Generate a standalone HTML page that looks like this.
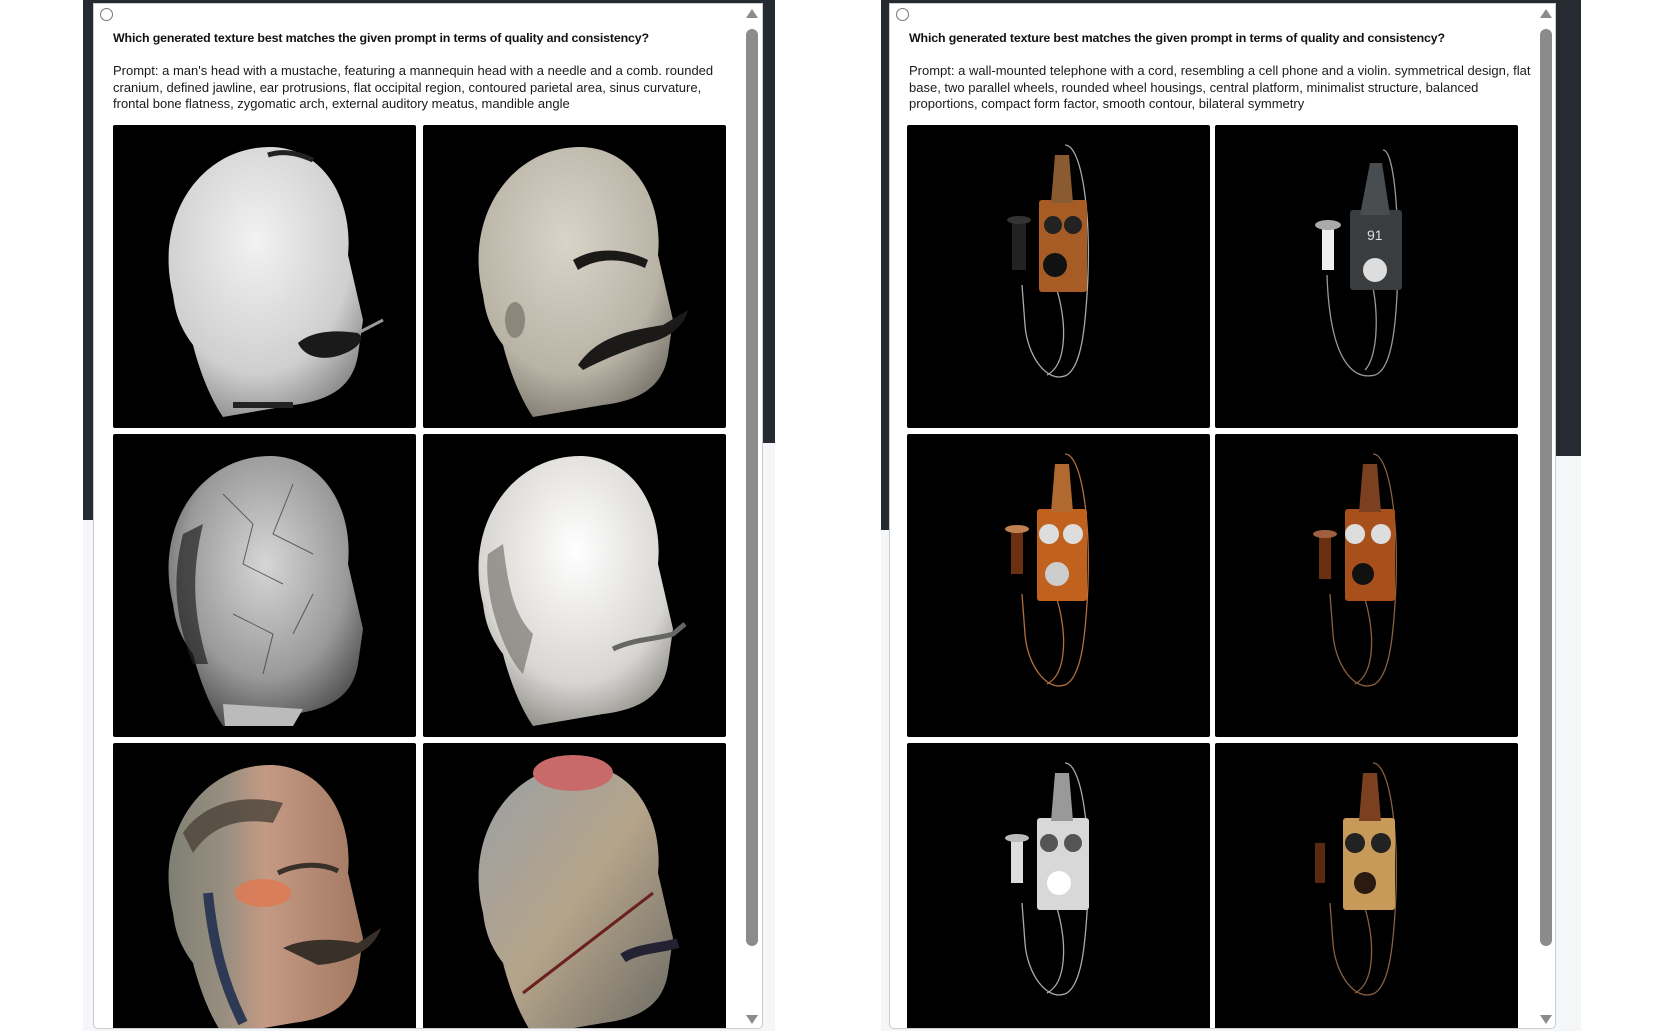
<!DOCTYPE html>
<html><head><meta charset="utf-8"><style>
html,body{margin:0;padding:0;width:1655px;height:1031px;overflow:hidden;background:#fff;font-family:"Liberation Sans",Arial,sans-serif}
.bgL{position:absolute;background:#f5f6f8}
.dk{position:absolute;background:#252b31}
.card{position:absolute;top:3px;height:1024px;background:#fff;border:1px solid #c9ccd0;border-radius:0 0 5px 5px;overflow:hidden}
.q{position:absolute;left:19px;top:27px;font-size:12.4px;font-weight:bold;color:#111;white-space:nowrap;letter-spacing:-0.15px}
.p{position:absolute;left:19px;top:59px;width:622px;font-size:13px;line-height:16.5px;color:#1a1a1a;letter-spacing:0}
.circ{position:absolute;left:6px;top:4px;width:11px;height:11px;border:1px solid #777;border-radius:50%}
.tile{position:absolute;width:303px;height:303px;background:#000;border-radius:2px}
.tile svg{display:block}
.sb{position:absolute;width:12px;top:25px;height:917px;background:#8b8b8b;border-radius:6px}
.ua,.da{position:absolute;width:0;height:0;border-left:6px solid transparent;border-right:6px solid transparent}
.ua{top:5px;border-bottom:9px solid #8b8b8b}
.da{top:1011px;border-top:9px solid #8b8b8b}
</style></head><body>
<div class="bgL" style="left:83px;top:0;width:692px;height:1031px"></div>
<div class="bgL" style="left:881px;top:0;width:700px;height:1031px"></div>
<div class="dk" style="left:83px;top:0;width:692px;height:443px"></div>
<div class="dk" style="left:83px;top:443px;width:10px;height:77px"></div>
<div class="dk" style="left:881px;top:0;width:700px;height:456px"></div>
<div class="dk" style="left:881px;top:456px;width:8px;height:74px"></div>

<svg width="0" height="0" style="position:absolute"><defs>
<radialGradient id="gW" cx="0.45" cy="0.35" r="0.7"><stop offset="0" stop-color="#f2f2f2"/><stop offset="0.7" stop-color="#cfcfcf"/><stop offset="1" stop-color="#8a8a8a"/></radialGradient>
<radialGradient id="gB" cx="0.45" cy="0.35" r="0.7"><stop offset="0" stop-color="#d9d4c8"/><stop offset="0.7" stop-color="#b9b3a6"/><stop offset="1" stop-color="#7d786e"/></radialGradient>
<radialGradient id="gS" cx="0.5" cy="0.4" r="0.7"><stop offset="0" stop-color="#d6d6d6"/><stop offset="0.6" stop-color="#9a9a9a"/><stop offset="1" stop-color="#3a3a3a"/></radialGradient>
<radialGradient id="gC" cx="0.5" cy="0.35" r="0.7"><stop offset="0" stop-color="#ffffff"/><stop offset="0.7" stop-color="#d8d6d2"/><stop offset="1" stop-color="#8d8b86"/></radialGradient>
<linearGradient id="gP" x1="0" y1="0" x2="1" y2="0"><stop offset="0" stop-color="#7e8074"/><stop offset="0.3" stop-color="#9a8f80"/><stop offset="0.5" stop-color="#c49a84"/><stop offset="1" stop-color="#a27861"/></linearGradient>
<linearGradient id="gM" x1="0" y1="0" x2="1" y2="1"><stop offset="0" stop-color="#9aa0a6"/><stop offset="0.5" stop-color="#b5a48a"/><stop offset="1" stop-color="#6b6a64"/></linearGradient>
</defs></svg>

<!-- LEFT CARD -->
<div class="card" style="left:93px;width:668px">
<div class="circ"></div>
<div class="q">Which generated texture best matches the given prompt in terms of quality and consistency?</div>
<div class="p">Prompt: a man's head with a mustache, featuring a mannequin head with a needle and a comb. rounded cranium, defined jawline, ear protrusions, flat occipital region, contoured parietal area, sinus curvature, frontal bone flatness, zygomatic arch, external auditory meatus, mandible angle</div>

<div class="tile" style="left:19px;top:121px"><svg width="303" height="303"><path d="M60,170 C40,90 90,20 160,22 C215,25 240,80 235,130 L250,195 L245,230 C240,260 220,275 180,280 L110,292 C95,270 85,240 80,220 C65,200 62,185 60,170 Z" fill="url(#gW)"/><path d="M185,218 C200,205 225,205 245,208 C255,215 240,228 220,232 C205,235 190,230 185,218Z" fill="#1a1a1a"/><path d="M155,30 C170,25 185,28 200,35" stroke="#222" stroke-width="5" fill="none"/><path d="M120,280 L180,280" stroke="#222" stroke-width="6"/><path d="M245,208 L270,195" stroke="#999" stroke-width="3"/></svg></div>
<div class="tile" style="left:329px;top:121px"><svg width="303" height="303"><path d="M60,170 C40,90 90,20 160,22 C215,25 240,80 235,130 L250,195 L245,230 C240,260 220,275 180,280 L110,292 C95,270 85,240 80,220 C65,200 62,185 60,170 Z" fill="url(#gB)"/><path d="M150,135 C175,120 205,125 225,135 L222,143 C200,133 175,132 155,145Z" fill="#1c1a18"/><path d="M155,240 C175,210 210,205 240,200 L265,185 C260,205 240,215 225,218 C205,225 185,232 160,245Z" fill="#1c1a18"/><ellipse cx="92" cy="195" rx="10" ry="18" fill="#8d877b"/></svg></div>

<div class="tile" style="left:19px;top:430px"><svg width="303" height="303"><path d="M60,170 C40,90 90,20 160,22 C215,25 240,80 235,130 L250,195 L245,230 C240,260 220,275 180,280 L110,292 C95,270 85,240 80,220 C65,200 62,185 60,170 Z" fill="url(#gS)"/><path d="M70,100 C60,140 60,180 80,230 L95,230 C80,180 78,140 90,90Z" fill="#222" opacity=".7"/><g stroke="#333" stroke-width="1" fill="none" opacity=".7"><path d="M110,60 L140,90 L130,130 L170,150"/><path d="M180,50 L160,100 L200,120"/><path d="M120,180 L160,200 L150,240"/><path d="M200,160 L180,200"/></g><path d="M110,270 L190,275 L180,292 L112,292Z" fill="#bbb"/></svg></div>
<div class="tile" style="left:329px;top:430px"><svg width="303" height="303"><path d="M60,170 C40,90 90,20 160,22 C215,25 240,80 235,130 L250,195 L245,230 C240,260 220,275 180,280 L110,292 C95,270 85,240 80,220 C65,200 62,185 60,170 Z" fill="url(#gC)"/><path d="M65,120 C60,160 80,220 100,240 L110,200 C90,180 85,150 80,110Z" fill="#7a7670" opacity=".7"/><path d="M190,215 C210,205 235,205 250,200 L262,190" stroke="#666" stroke-width="5" fill="none"/></svg></div>

<div class="tile" style="left:19px;top:739px"><svg width="303" height="303"><path d="M60,170 C40,90 90,20 160,22 C215,25 240,80 235,130 L250,195 L245,230 C240,260 220,275 180,280 L110,292 C95,270 85,240 80,220 C65,200 62,185 60,170 Z" fill="url(#gP)"/><path d="M70,90 C90,60 130,50 170,60 L160,80 C130,75 100,80 80,110Z" fill="#4a4238" opacity=".8"/><path d="M95,150 C100,200 110,240 130,280" stroke="#2e3a55" stroke-width="10" fill="none"/><ellipse cx="150" cy="150" rx="28" ry="14" fill="#e07850" opacity=".8"/><path d="M170,205 C190,195 220,195 245,200 L268,185 C260,210 230,220 205,222Z" fill="#3a302a"/><path d="M165,130 C185,120 210,120 225,128" stroke="#3a302a" stroke-width="5" fill="none"/></svg></div>
<div class="tile" style="left:329px;top:739px"><svg width="303" height="303"><path d="M60,170 C40,90 90,20 160,22 C215,25 240,80 235,130 L250,195 L245,230 C240,260 220,275 180,280 L110,292 C95,270 85,240 80,220 C65,200 62,185 60,170 Z" fill="url(#gM)"/><ellipse cx="150" cy="30" rx="40" ry="18" fill="#c86a6a"/><path d="M100,250 L230,150" stroke="#6b2020" stroke-width="3"/><path d="M200,215 C215,205 240,205 255,200" stroke="#223" stroke-width="10" fill="none"/></svg></div>

<div class="sb" style="left:652px"></div>
<div class="ua" style="left:652px"></div>
<div class="da" style="left:652px"></div>
</div>

<!-- RIGHT CARD -->
<div class="card" style="left:889px;width:665px">
<div class="circ"></div>
<div class="q">Which generated texture best matches the given prompt in terms of quality and consistency?</div>
<div class="p">Prompt: a wall-mounted telephone with a cord, resembling a cell phone and a violin. symmetrical design, flat base, two parallel wheels, rounded wheel housings, central platform, minimalist structure, balanced proportions, compact form factor, smooth contour, bilateral symmetry</div>

<div class="tile" style="left:17px;top:121px"><svg width="303" height="303"><path d="M158,20 C175,20 185,90 180,170 C178,200 175,240 160,250 C140,260 120,230 118,200 L115,160 M150,165 C160,200 160,240 140,250" stroke="#aaa" stroke-width="1.3" fill="none"/><rect x="132" y="75" width="48" height="92" rx="3" fill="#a65c24"/><path d="M148,30 L162,30 L166,78 L144,78Z" fill="#8a5a30"/><circle cx="146" cy="100" r="9" fill="#222"/><circle cx="166" cy="100" r="9" fill="#222"/><circle cx="148" cy="140" r="12" fill="#111"/><rect x="105" y="95" width="14" height="50" fill="#222"/><ellipse cx="112" cy="95" rx="12" ry="4" fill="#333"/></svg></div>
<div class="tile" style="left:325px;top:121px"><svg width="303" height="303"><path d="M168,25 C180,25 185,100 182,170 C180,210 175,245 160,250 C140,255 115,240 112,150 M150,135 C165,170 165,230 150,245" stroke="#999" stroke-width="1.3" fill="none"/><rect x="135" y="85" width="52" height="80" rx="3" fill="#3a3d40"/><path d="M155,38 L167,38 L175,90 L145,90Z" fill="#4a4d50"/><circle cx="160" cy="145" r="12" fill="#ddd"/><rect x="107" y="100" width="12" height="45" fill="#eee"/><ellipse cx="113" cy="100" rx="13" ry="5" fill="#aaa"/><text x="152" y="115" fill="#ddd" font-size="14" font-family="Liberation Sans">91</text></svg></div>

<div class="tile" style="left:17px;top:430px"><svg width="303" height="303"><path d="M158,20 C175,20 185,90 180,170 C178,200 175,240 160,250 C140,260 120,230 118,200 L115,160 M150,165 C160,200 160,240 140,250" stroke="#b07040" stroke-width="1.3" fill="none"/><rect x="130" y="75" width="50" height="92" rx="3" fill="#c0621e"/><path d="M148,30 L162,30 L166,78 L144,78Z" fill="#b06a30"/><circle cx="142" cy="100" r="10" fill="#ddd"/><circle cx="166" cy="100" r="10" fill="#ddd"/><circle cx="150" cy="140" r="12" fill="#ccc"/><rect x="104" y="95" width="12" height="45" fill="#6a3010"/><ellipse cx="110" cy="95" rx="12" ry="4" fill="#c08050"/></svg></div>
<div class="tile" style="left:325px;top:430px"><svg width="303" height="303"><path d="M158,20 C175,20 185,90 180,170 C178,200 175,240 160,250 C140,260 120,230 118,200 L115,160 M150,165 C160,200 160,240 140,250" stroke="#8a6040" stroke-width="1.3" fill="none"/><rect x="130" y="75" width="50" height="92" rx="3" fill="#a8501c"/><path d="M148,30 L162,30 L166,78 L144,78Z" fill="#7a4020"/><circle cx="140" cy="100" r="10" fill="#ddd"/><circle cx="166" cy="100" r="10" fill="#ddd"/><circle cx="148" cy="140" r="11" fill="#111"/><rect x="104" y="100" width="12" height="45" fill="#6a3010"/><ellipse cx="110" cy="100" rx="12" ry="4" fill="#a06040"/></svg></div>

<div class="tile" style="left:17px;top:739px"><svg width="303" height="303"><path d="M158,20 C175,20 185,90 180,170 C178,200 175,240 160,250 C140,260 120,230 118,200 L115,160 M150,165 C160,200 160,240 140,250" stroke="#aaa" stroke-width="1.3" fill="none"/><rect x="130" y="75" width="52" height="92" rx="3" fill="#d8d8d8"/><path d="M148,30 L162,30 L166,78 L144,78Z" fill="#999"/><circle cx="142" cy="100" r="9" fill="#555"/><circle cx="166" cy="100" r="9" fill="#555"/><circle cx="152" cy="140" r="12" fill="#fff"/><rect x="104" y="95" width="12" height="45" fill="#ddd"/><ellipse cx="110" cy="95" rx="12" ry="4" fill="#bbb"/></svg></div>
<div class="tile" style="left:325px;top:739px"><svg width="303" height="303"><path d="M158,20 C175,20 185,90 180,170 C178,200 175,240 160,250 C140,260 120,230 118,200 L115,160 M150,165 C160,200 160,240 140,250" stroke="#8a6040" stroke-width="1.3" fill="none"/><rect x="128" y="75" width="52" height="92" rx="3" fill="#c89a5a"/><path d="M148,30 L162,30 L166,78 L144,78Z" fill="#7a4020"/><circle cx="140" cy="100" r="10" fill="#222"/><circle cx="166" cy="100" r="10" fill="#222"/><circle cx="150" cy="140" r="11" fill="#2a1a10"/><rect x="100" y="100" width="10" height="40" fill="#5a2a10"/></svg></div>

<div class="sb" style="left:650px"></div>
<div class="ua" style="left:650px"></div>
<div class="da" style="left:650px"></div>
</div>
</body></html>
